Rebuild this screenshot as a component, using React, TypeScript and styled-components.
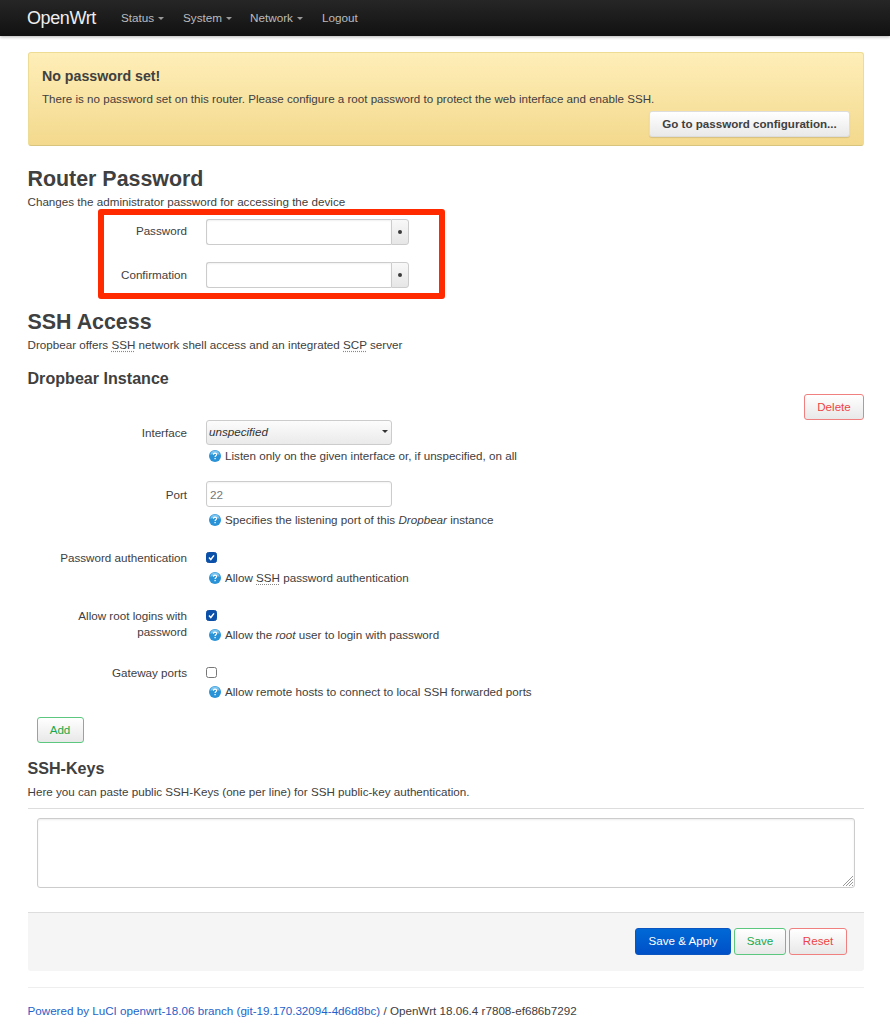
import React from "react";
import styled, { createGlobalStyle } from "styled-components";

const Global = createGlobalStyle`
  html, body { margin: 0; padding: 0; background: #fff; }
  body { font-family: "Liberation Sans", Arial, sans-serif; font-size: 11.65px; line-height: 16px; color: #404040; }
`;

const Page = styled.div`
  position: relative;
  width: 890px;
  height: 1024px;
  overflow: hidden;
`;

const Navbar = styled.header`
  display: flex;
  align-items: center;
  height: 36px;
  padding-left: 27px;
  background: linear-gradient(#262626, #111);
  box-shadow: 0 1px 3px rgba(0, 0, 0, 0.3);
`;
const Brand = styled.a`
  font-size: 18px;
  letter-spacing: -0.4px;
  color: #eee;
  width: 94px;
`;
const NavItem = styled.a<{ $w: number }>`
  display: flex;
  align-items: center;
  gap: 4px;
  width: ${(p) => p.$w}px;
  font-size: 11.7px;
  color: #bbb;
`;
const Caret = styled.i`
  width: 0;
  height: 0;
  border-left: 3.5px solid transparent;
  border-right: 3.5px solid transparent;
  border-top: 3.5px solid #999;
`;

const Main = styled.main`
  padding: 16px 26px 0 27.5px;
`;
const Alert = styled.section`
  box-sizing: border-box;
  height: 94px;
  padding: 14px 13px 0 13.5px;
  border: 1px solid #eedc94;
  border-bottom-color: #d8c47c;
  border-radius: 3px;
  background: linear-gradient(#feeeb8, #f3d98d);
  display: flex;
  flex-direction: column;
`;
const AlertTitle = styled.h4`
  margin: 0;
  font-size: 14.2px;
  line-height: 18px;
  font-weight: bold;
  color: #404040;
`;
const AlertText = styled.p`
  margin: 6px 0 0;
  font-size: 11.6px;
`;
const AlertButton = styled.button`
  align-self: flex-end;
  margin-top: 4px;
  width: 201px;
  height: 26px;
  padding: 0 0 2px;
  font: bold 11.6px "Liberation Sans", Arial, sans-serif;
  color: #404040;
  background: linear-gradient(#fff, #e9e9e9);
  border: 1px solid #ddd;
  border-radius: 3px;
  box-shadow: 0 1px 1px rgba(0, 0, 0, 0.12);
`;

const H2 = styled.h2<{ $top: number }>`
  margin: ${(p) => p.$top}px 0 0;
  font-size: 21.4px;
  line-height: 26px;
  font-weight: bold;
  color: #404040;
`;
const H3 = styled.h3<{ $top: number }>`
  margin: ${(p) => p.$top}px 0 0;
  font-size: 16.1px;
  line-height: 20px;
  font-weight: bold;
  color: #404040;
`;
const Desc = styled.p<{ $top: number }>`
  margin: ${(p) => p.$top}px 0 0;
`;
const Abbr = styled.abbr`
  text-decoration: underline dotted #888;
  text-underline-offset: 2px;
`;

const Row = styled.div<{ $top: number; $h?: number }>`
  display: grid;
  grid-template-columns: 159.5px 1fr;
  column-gap: 19px;
  margin-top: ${(p) => p.$top}px;
  height: ${(p) => (p.$h ? `${p.$h}px` : "auto")};
`;
const Label = styled.label<{ $pad?: number }>`
  text-align: right;
  padding-left: 30px;
  padding-top: ${(p) => p.$pad ?? 4}px;
`;
const Field = styled.div`
  display: flex;
  flex-direction: column;
  align-items: flex-start;
`;

const PassGroup = styled.div`
  display: flex;
  height: 26px;
`;
const PassInput = styled.input`
  box-sizing: border-box;
  width: 185px;
  height: 26px;
  border: 1px solid #ccc;
  border-right: 0;
  border-radius: 3px 0 0 3px;
  box-shadow: inset 0 1px 2px rgba(0, 0, 0, 0.06);
  background: #fff;
`;
const Reveal = styled.span`
  box-sizing: border-box;
  width: 18px;
  height: 26px;
  display: flex;
  align-items: center;
  justify-content: center;
  background: linear-gradient(#f8f8f8, #e6e6e6);
  border: 1px solid #ccc;
  border-radius: 0 3px 3px 0;
`;
const Dot = styled.i`
  width: 4px;
  height: 4px;
  border-radius: 50%;
  background: #3a3a3a;
`;

const DeleteWrap = styled.div`
  display: flex;
  justify-content: flex-end;
  margin-top: 6px;
  height: 26px;
`;

const Btn = styled.button<{ $c: string; $bd: string; $w: number; $h?: number }>`
  box-sizing: border-box;
  width: ${(p) => p.$w}px;
  height: ${(p) => p.$h ?? 26}px;
  padding: 0 0 2px;
  font: 11.6px "Liberation Sans", Arial, sans-serif;
  color: ${(p) => p.$c};
  background: linear-gradient(#fff, #e8e8e8);
  border: 1px solid ${(p) => p.$bd};
  border-radius: 3px;
`;
const PrimaryBtn = styled.button`
  box-sizing: border-box;
  width: 96px;
  height: 27px;
  padding: 0 0 2px;
  font: 11.6px "Liberation Sans", Arial, sans-serif;
  color: #fff;
  background: linear-gradient(#0069d6, #0050c8);
  border: 1px solid #0a55c0;
  border-radius: 3px;
`;

const Select = styled.div`
  box-sizing: border-box;
  width: 186px;
  height: 25px;
  display: flex;
  align-items: center;
  justify-content: space-between;
  padding: 0 3px 2px 2px;
  font-style: italic;
  color: #333;
  background: linear-gradient(#fcfcfc, #eaeaea);
  border: 1px solid #ccc;
  border-radius: 3px;
`;
const SelectCaret = styled.i`
  width: 0;
  height: 0;
  border-left: 3.5px solid transparent;
  border-right: 3.5px solid transparent;
  border-top: 3.5px solid #333;
`;
const TextInput = styled.input`
  box-sizing: border-box;
  width: 186px;
  height: 26px;
  padding: 0 3px;
  font: 11.7px "Liberation Sans", Arial, sans-serif;
  color: #777;
  border: 1px solid #ccc;
  border-radius: 3px;
  box-shadow: inset 0 1px 2px rgba(0, 0, 0, 0.05);
`;
const Help = styled.div<{ $top: number }>`
  display: flex;
  align-items: center;
  gap: 4px;
  margin: ${(p) => p.$top}px 0 0 3px;
`;
const Check = styled.span<{ $on?: boolean }>`
  box-sizing: border-box;
  display: flex;
  align-items: center;
  justify-content: center;
  width: 11px;
  height: 11px;
  margin-top: 2px;
  border-radius: 2.5px;
  background: ${(p) => (p.$on ? "#0a4fa8" : "#fff")};
  border: 1px solid ${(p) => (p.$on ? "#0a4fa8" : "#777")};
`;

const AddWrap = styled.div`
  margin: 0 0 0 9px;
  height: 26px;
`;
const Rule = styled.hr`
  margin: 8px 0 0;
  border: 0;
  border-top: 1px solid #ddd;
`;
const Textarea = styled.div`
  position: relative;
  box-sizing: border-box;
  width: 818px;
  height: 70px;
  margin: 9px 0 0 9px;
  border: 1px solid #ccc;
  border-radius: 3px;
  box-shadow: inset 0 1px 2px rgba(0, 0, 0, 0.08);
`;
const Grip = styled.svg`
  position: absolute;
  right: 0;
  bottom: 0;
`;
const Actions = styled.div`
  box-sizing: border-box;
  display: flex;
  justify-content: flex-end;
  gap: 3px;
  height: 59px;
  margin-top: 24px;
  padding: 15px 17px 0 0;
  background: #f5f5f5;
  border-top: 1px solid #ddd;
  border-radius: 0 0 3px 3px;
`;
const FooterRule = styled.hr`
  margin: 16px 0 0;
  border: 0;
  border-top: 1px solid #eee;
`;
const Footer = styled.footer`
  margin-top: 15px;
`;
const FooterLink = styled.a`
  color: #1f62c8;
`;
const Marker = styled.div`
  position: absolute;
  left: 98px;
  top: 209px;
  box-sizing: border-box;
  width: 347px;
  height: 90px;
  border: 6px solid #ff2a00;
  border-radius: 3px;
  pointer-events: none;
`;

const HelpIcon = () => (
  <svg width="12" height="12" viewBox="0 0 13 13" aria-hidden="true">
    <circle cx="6.5" cy="6.5" r="6.5" fill="#2a93d8" />
    <path d="M1.5 5.5a5 5 0 0 1 10 0c-2-1.4-8-1.4-10 0z" fill="#7cc4ee" />
    <path
      d="M4.8 5.1c0-2.2 3.5-2.2 3.5-.1 0 1.3-1.7 1.3-1.7 2.6"
      fill="none"
      stroke="#fff"
      strokeWidth="1.3"
    />
    <rect x="5.9" y="8.6" width="1.4" height="1.4" fill="#fff" />
  </svg>
);

const Tick = () => (
  <svg width="9" height="9" viewBox="0 0 9 9" aria-hidden="true">
    <path d="M2 4.6 L3.8 6.5 L7 2.4" fill="none" stroke="#fff" strokeWidth="1.5" />
  </svg>
);

export default function App() {
  return (
    <Page>
      <Global />
      <Navbar>
        <Brand>OpenWrt</Brand>
        <NavItem $w={62}>Status <Caret /></NavItem>
        <NavItem $w={67}>System <Caret /></NavItem>
        <NavItem $w={72}>Network <Caret /></NavItem>
        <NavItem $w={50}>Logout</NavItem>
      </Navbar>
      <Main>
        <Alert>
          <AlertTitle>No password set!</AlertTitle>
          <AlertText>
            There is no password set on this router. Please configure a root password to protect the web interface and enable SSH.
          </AlertText>
          <AlertButton>Go to password configuration...</AlertButton>
        </Alert>

        <H2 $top={20}>Router Password</H2>
        <Desc $top={2}>Changes the administrator password for accessing the device</Desc>
        <Row $top={9}>
          <Label>Password</Label>
          <PassGroup>
            <PassInput type="password" />
            <Reveal><Dot /></Reveal>
          </PassGroup>
        </Row>
        <Row $top={17}>
          <Label $pad={5}>Confirmation</Label>
          <PassGroup>
            <PassInput type="password" />
            <Reveal><Dot /></Reveal>
          </PassGroup>
        </Row>

        <H2 $top={21}>SSH Access</H2>
        <Desc $top={2}>
          Dropbear offers <Abbr>SSH</Abbr> network shell access and an integrated <Abbr>SCP</Abbr> server
        </Desc>
        <H3 $top={15}>Dropbear Instance</H3>
        <DeleteWrap>
          <Btn $c="#ee4444" $bd="#f08080" $w={60}>Delete</Btn>
        </DeleteWrap>

        <Row $top={0} $h={61}>
          <Label $pad={5}>Interface</Label>
          <Field>
            <Select>unspecified<SelectCaret /></Select>
            <Help $top={3}><HelpIcon /><span>Listen only on the given interface or, if unspecified, on all</span></Help>
          </Field>
        </Row>
        <Row $top={0} $h={69}>
          <Label $pad={6}>Port</Label>
          <Field>
            <TextInput defaultValue="22" />
            <Help $top={5}><HelpIcon /><span>Specifies the listening port of this <em>Dropbear</em> instance</span></Help>
          </Field>
        </Row>
        <Row $top={0} $h={58}>
          <Label $pad={0}>Password authentication</Label>
          <Field>
            <Check $on><Tick /></Check>
            <Help $top={7}><HelpIcon /><span>Allow <Abbr>SSH</Abbr> password authentication</span></Help>
          </Field>
        </Row>
        <Row $top={0} $h={57}>
          <Label $pad={0}>Allow root logins with password</Label>
          <Field>
            <Check $on><Tick /></Check>
            <Help $top={6}><HelpIcon /><span>Allow the <em>root</em> user to login with password</span></Help>
          </Field>
        </Row>
        <Row $top={0} $h={52}>
          <Label $pad={0}>Gateway ports</Label>
          <Field>
            <Check />
            <Help $top={6}><HelpIcon /><span>Allow remote hosts to connect to local SSH forwarded ports</span></Help>
          </Field>
        </Row>
        <AddWrap>
          <Btn $c="#1aa84a" $bd="#5cc77f" $w={47}>Add</Btn>
        </AddWrap>

        <H3 $top={15}>SSH-Keys</H3>
        <Desc $top={6}>Here you can paste public SSH-Keys (one per line) for SSH public-key authentication.</Desc>
        <Rule />
        <Textarea>
          <Grip width="12" height="12" viewBox="0 0 12 12" aria-hidden="true">
            <path d="M1 11 L11 1 M4 11 L11 4 M7 11 L11 7 M10 11 L11 10" stroke="#999" strokeWidth="1" />
          </Grip>
        </Textarea>
        <Actions>
          <PrimaryBtn>Save &amp; Apply</PrimaryBtn>
          <Btn $c="#1aa84a" $bd="#5cc77f" $w={52} $h={27}>Save</Btn>
          <Btn $c="#ee4444" $bd="#f08080" $w={58} $h={27}>Reset</Btn>
        </Actions>
        <FooterRule />
        <Footer>
          <FooterLink>Powered by LuCI openwrt-18.06 branch (git-19.170.32094-4d6d8bc)</FooterLink> / OpenWrt 18.06.4 r7808-ef686b7292
        </Footer>
      </Main>
      <Marker />
    </Page>
  );
}
